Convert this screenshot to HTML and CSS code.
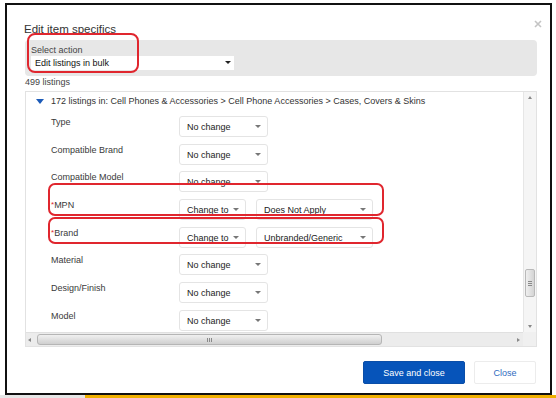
FILE: index.html
```html
<!DOCTYPE html>
<html>
	<head>
		<meta charset="UTF-8">
		<title>Edit item specifics</title>
		<link rel="stylesheet" href="styles.css">
	</head>
	<body>
		<div class="frame">
			<div class="head">
				<h1 class="title">Edit item specifics</h1>
				<span class="close-x">
					<svg width="8" height="8" viewBox="0 0 8 8"><path d="M1 1L7 7M7 1L1 7" stroke="#c4c4c4" stroke-width="1.6"/></svg>
				</span>
			</div>
			<div class="action-panel">
				<div class="action-label">Select action</div>
				<div class="action-select">Edit listings in bulk</div>
				<div class="mark mark-action"></div>
			</div>
			<div class="count">499 listings</div>
			<div class="list-box">
				<div class="list-view">
					<div class="cat"><span class="tri"></span>172 listings in: Cell Phones &amp; Accessories &gt; Cell Phone Accessories &gt; Cases, Covers &amp; Skins</div>
					<div class="fields">
						<div class="label">Type</div>
						<div class="controls"><div class="dd dd-a">No change</div></div>
						<div class="label">Compatible Brand</div>
						<div class="controls"><div class="dd dd-a">No change</div></div>
						<div class="label">Compatible Model</div>
						<div class="controls"><div class="dd dd-a">No change</div></div>
						<div class="label"><span class="req">*</span>MPN</div>
						<div class="controls"><div class="dd dd-b">Change to</div><div class="dd dd-c">Does Not Apply</div></div>
						<div class="label"><span class="req">*</span>Brand</div>
						<div class="controls"><div class="dd dd-b">Change to</div><div class="dd dd-c">Unbranded/Generic</div></div>
						<div class="label">Material</div>
						<div class="controls"><div class="dd dd-a">No change</div></div>
						<div class="label">Design/Finish</div>
						<div class="controls"><div class="dd dd-a">No change</div></div>
						<div class="label">Model</div>
						<div class="controls"><div class="dd dd-a">No change</div></div>
					</div>
					<div class="mark mark-mpn"></div>
					<div class="mark mark-brand"></div>
				</div>
				<div class="vbar">
					<span class="arr arr-up"></span>
					<span class="vthumb"><i></i><i></i><i></i></span>
					<span class="arr arr-down"></span>
				</div>
				<div class="hbar">
					<span class="arr arr-left"></span>
					<span class="hthumb"><i></i><i></i><i></i></span>
					<span class="arr arr-right"></span>
				</div>
				<div class="corner"></div>
			</div>
			<div class="foot">
				<button class="btn btn-save">Save and close</button>
				<button class="btn btn-close">Close</button>
			</div>
		</div>
		<div class="strip"><span class="strip-grey"></span><span class="strip-gold"></span></div>
	</body>
</html>
```

FILE: styles.css
```css
* {
	margin: 0;
	padding: 0;
	box-sizing: border-box;
}

body {
	background: #fff;
	font-family: "Liberation Sans", Arial, sans-serif;
	font-size: 9px;
	color: #333;
}

.frame {
	width: 547px;
	height: 392px;
	margin: 3px 0 0 5px;
	border: 2px solid #111;
	padding: 0 13px 0 18px;
	background: #fff;
}

.head {
	display: flex;
	justify-content: space-between;
	margin-top: 17px;
}

.title {
	font-size: 11.5px;
	font-weight: normal;
	line-height: 14px;
	color: #333;
	margin-left: -1px;
}

.close-x {
	display: block;
	width: 8px;
	height: 8px;
	margin: -2px -5px 0 0;
}

.close-x svg {
	display: block;
}

.action-panel {
	position: relative;
	height: 36px;
	margin-top: 4px;
	padding: 5px 6px 0;
	background: #e7e7e7;
	border-radius: 4px;
}

.action-label {
	line-height: 11px;
	color: #444;
}

.action-select {
	position: relative;
	width: 203px;
	height: 14px;
	padding-left: 4px;
	line-height: 14px;
	background: #fff;
	color: #111;
}

.action-select::after {
	content: "";
	position: absolute;
	right: 3px;
	top: 5px;
	border-left: 3px solid transparent;
	border-right: 3px solid transparent;
	border-top: 3px solid #222;
}

.mark {
	position: absolute;
	border: 2px solid #e0262e;
	border-radius: 8px;
}

.mark-action {
	left: 2px;
	top: -7px;
	width: 112px;
	height: 40px;
}

.count {
	margin-top: 1px;
	line-height: 11px;
	color: #444;
}

.list-box {
	display: grid;
	grid-template-columns: 1fr 13px;
	grid-template-rows: 1fr 14px;
	height: 256px;
	margin-top: 3px;
	border: 1px solid #e2e2e2;
}

.list-view {
	position: relative;
	overflow: hidden;
	padding-top: 3px;
}

.cat {
	display: flex;
	align-items: center;
	padding-left: 10px;
	line-height: 13px;
	white-space: nowrap;
	color: #333;
}

.tri {
	width: 0;
	height: 0;
	margin-right: 7px;
	border-left: 4px solid transparent;
	border-right: 4px solid transparent;
	border-top: 5px solid #1c5bb8;
}

.fields {
	display: grid;
	grid-template-columns: 128px auto;
	grid-auto-rows: 21px;
	row-gap: 6.7px;
	margin-top: 8px;
	padding-left: 25px;
}

.label {
	padding-top: 1px;
	line-height: 11px;
	color: #3a3a3a;
}

.req {
	color: #e0262e;
	font-size: 8px;
	position: relative;
	top: -1px;
}

.controls {
	display: flex;
	gap: 10px;
}

.dd {
	position: relative;
	height: 21px;
	padding-left: 7px;
	line-height: 21px;
	border: 1px solid #e4e4e4;
	border-radius: 3px;
	color: #222;
	background: #fff;
}

.dd::after {
	content: "";
	position: absolute;
	right: 6px;
	top: 8px;
	border-left: 3px solid transparent;
	border-right: 3px solid transparent;
	border-top: 3px solid #777;
}

.dd-a {
	width: 89px;
}

.dd-b {
	width: 67px;
}

.dd-c {
	width: 117px;
}

.mark-mpn {
	left: 22px;
	top: 91px;
	width: 336px;
	height: 33px;
	border-radius: 7px;
}

.mark-brand {
	left: 22px;
	top: 125px;
	width: 336px;
	height: 27px;
	border-radius: 7px;
}

.vbar {
	display: flex;
	flex-direction: column;
	align-items: center;
	background: #f5f5f5;
	border-left: 1px solid #e6e6e6;
}

.hbar {
	display: flex;
	align-items: center;
	background: #ececec;
	border-top: 1px solid #e0e0e0;
}

.corner {
	background: #f0f0f0;
}

.arr {
	display: block;
	width: 0;
	height: 0;
	border: 2px solid transparent;
}

.arr-up {
	margin-top: 4px;
	border-bottom: 3px solid #888;
	border-top-width: 0;
}

.arr-down {
	margin-top: auto;
	margin-bottom: 4px;
	border-top: 3px solid #888;
	border-bottom-width: 0;
}

.arr-left {
	margin-left: 2px;
	border-right: 3px solid #888;
	border-left-width: 0;
}

.arr-right {
	margin-left: auto;
	margin-right: 3px;
	border-left: 3px solid #888;
	border-right-width: 0;
}

.vthumb {
	display: flex;
	flex-direction: column;
	justify-content: center;
	align-items: center;
	gap: 1px;
	width: 10px;
	height: 28px;
	margin-top: 170px;
	background: linear-gradient(to right, #efefef, #d4d4d4);
	border: 1px solid #b9b9b9;
	border-radius: 2px;
}

.vthumb i {
	display: block;
	width: 4px;
	height: 1px;
	background: #8a8a8a;
}

.hthumb {
	display: flex;
	justify-content: center;
	align-items: center;
	gap: 1px;
	width: 345px;
	height: 11px;
	margin-left: 6px;
	background: linear-gradient(#f0f0f0, #cfcfcf);
	border: 1px solid #b5b5b5;
	border-radius: 3px;
}

.hthumb i {
	display: block;
	width: 1px;
	height: 4px;
	background: #8a8a8a;
}

.foot {
	display: flex;
	justify-content: flex-end;
	gap: 9px;
	margin-top: 14px;
	padding-right: 1px;
}

.btn {
	height: 23px;
	font-family: "Liberation Sans", Arial, sans-serif;
	font-size: 9px;
	border-radius: 2px;
	cursor: pointer;
}

.btn-save {
	width: 102px;
	background: #0654ba;
	border: 1px solid #0a4ea8;
	color: #fff;
}

.btn-close {
	width: 62px;
	background: #fff;
	border: 1px solid #ececec;
	color: #2f6bc0;
}

.strip {
	display: flex;
	height: 3px;
}

.strip-grey {
	width: 85px;
	background: #e6e6e6;
}

.strip-gold {
	flex: 1;
	background: #f0b000;
}
```
